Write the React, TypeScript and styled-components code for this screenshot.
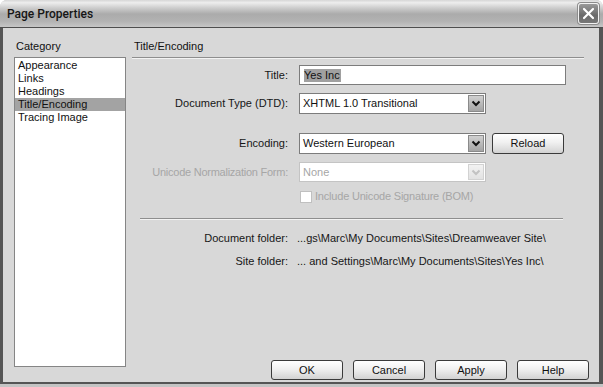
import React from "react";
import styled, { createGlobalStyle } from "styled-components";

const Global = createGlobalStyle`
  html, body { margin: 0; padding: 0; background: #ffffff; }
  body { font-family: "Liberation Sans", Arial, sans-serif; font-size: 11px; color: #111; }
`;

const Window = styled.div`
  width: 603px;
  height: 387px;
  box-sizing: border-box;
  display: flex;
  flex-direction: column;
  background: #c4c4c4;
  border-radius: 7px 7px 0 0;
  overflow: hidden;
  padding-bottom: 3px;
`;

const TitleBar = styled.div`
  height: 27px;
  flex: none;
  display: flex;
  align-items: center;
  justify-content: space-between;
  padding: 0 4px 0 7px;
  background: linear-gradient(
    to bottom,
    #d6d6d6 0%,
    #ededed 10%,
    #cfcfcf 28%,
    #ababab 52%,
    #b2b2b2 78%,
    #c6c6c6 100%
  );
  border-bottom: 1px solid #4e4e4e;
`;

const TitleText = styled.span`
  font-family: Roboto, "Liberation Sans", sans-serif;
  font-weight: 500;
  font-size: 12px;
  color: #161616;
`;

const CloseButton = styled.div`
  width: 21px;
  height: 21px;
  box-sizing: border-box;
  border: 1px solid #f2f2f2;
  border-radius: 3px;
  background: linear-gradient(to bottom, #9a9a9a, #6a6a6a 60%, #787878);
  box-shadow: 0 0 0 1px #8c8c8c;
  display: flex;
  align-items: center;
  justify-content: center;
`;

const Body = styled.div`
  flex: 1;
  display: flex;
  min-height: 0;
  background: #d8d8d8;
  border-left: 3px solid #555;
  border-right: 4px solid #555;
  border-bottom: 2px solid #555;
`;

const LeftColumn = styled.div`
  width: 112px;
  flex: none;
  display: flex;
  flex-direction: column;
  padding: 12px 0 15px 11px;
`;

const SectionLabel = styled.div`
  line-height: 13px;
  height: 13px;
  padding-left: 2px;
  margin-bottom: 4px;
`;

const ListBox = styled.div`
  flex: 1;
  background: #ffffff;
  border: 1px solid #858585;
  padding: 1px 0;
`;

const ListItem = styled.div<{ $selected?: boolean }>`
  height: 13px;
  line-height: 13px;
  padding-left: 3px;
  background: ${(p) => (p.$selected ? "#a3a3a3" : "transparent")};
`;

const RightColumn = styled.div`
  flex: 1;
  display: flex;
  flex-direction: column;
  padding: 12px 10px 2px 6px;
`;

const PanelHeader = styled.div`
  line-height: 13px;
  padding: 0 0 4px 2px;
  margin-right: 5px;
  border-bottom: 1px solid #8e8e8e;
  box-shadow: 0 1px 0 #f3f3f3;
`;

const Row = styled.div<{ $mt: number; $h?: number }>`
  display: grid;
  grid-template-columns: 156px auto;
  column-gap: 11px;
  align-items: center;
  margin-top: ${(p) => p.$mt}px;
  height: ${(p) => (p.$h ? `${p.$h}px` : "auto")};
  line-height: 13px;
`;

const Label = styled.div<{ $disabled?: boolean }>`
  text-align: right;
  white-space: nowrap;
  letter-spacing: ${(p) => (p.$disabled ? "-0.25px" : "0")};
  color: ${(p) => (p.$disabled ? "#a6a6a6" : "#161616")};
`;

const TextField = styled.div`
  width: 267px;
  height: 20px;
  box-sizing: border-box;
  background: #fff;
  border: 1px solid #7c7c7c;
  padding-left: 4px;
  display: flex;
  align-items: center;
`;

const Highlight = styled.span`
  background: #a0a0a0;
  padding: 0 1px 0 0;
  line-height: 13px;
`;

const Select = styled.div<{ $disabled?: boolean; $h: number }>`
  width: 187px;
  height: ${(p) => p.$h}px;
  box-sizing: border-box;
  background: #fff;
  border: 1px solid ${(p) => (p.$disabled ? "#c4c4c4" : "#7c7c7c")};
  display: flex;
  align-items: center;
  color: ${(p) => (p.$disabled ? "#a6a6a6" : "#111")};
`;

const SelectText = styled.span`
  flex: 1;
  padding-left: 3px;
  white-space: nowrap;
`;

const ArrowBox = styled.div<{ $disabled?: boolean }>`
  width: 16px;
  align-self: stretch;
  margin: 1px;
  box-sizing: border-box;
  border: 1px solid ${(p) => (p.$disabled ? "#d2d2d2" : "#8a8a8a")};
  background: ${(p) =>
    p.$disabled
      ? "linear-gradient(to bottom, #f2f2f2, #e2e2e2)"
      : "linear-gradient(to bottom, #d0d0d0, #a4a4a4)"};
  display: flex;
  align-items: center;
  justify-content: center;
`;

const ControlGroup = styled.div`
  display: flex;
  align-items: center;
  gap: 6px;
`;

const PushButton = styled.div<{ $h: number }>`
  width: 72px;
  height: ${(p) => p.$h}px;
  box-sizing: border-box;
  border: 1px solid #3a3a3a;
  border-radius: 3px;
  background: linear-gradient(to bottom, #ffffff 0%, #f0f0f0 45%, #d2d2d2 100%);
  display: flex;
  align-items: center;
  justify-content: center;
  color: #111;
`;

const CheckRow = styled.div`
  display: flex;
  align-items: center;
  gap: 3px;
  color: #a6a6a6;
  white-space: nowrap;
  letter-spacing: -0.2px;
`;

const CheckBox = styled.div`
  width: 12px;
  height: 12px;
  box-sizing: border-box;
  margin-left: 1px;
  background: #fff;
  border: 1px solid #c0c0c0;
`;

const Separator = styled.div`
  margin: 15px 0 0 8px;
  width: 423px;
  border-top: 1px solid #8e8e8e;
  box-shadow: 0 1px 0 #f3f3f3;
`;

const PathValue = styled.div`
  margin-left: -2px;
  white-space: nowrap;
  color: #161616;
`;

const Footer = styled.div`
  margin-top: auto;
  display: flex;
  justify-content: flex-end;
  gap: 10px;
`;

const Chevron = ({ color }: { color: string }) => (
  <svg width="10" height="7" viewBox="0 0 10 7">
    <path d="M1.5 1.5 L5 5 L8.5 1.5" fill="none" stroke={color} strokeWidth="2" />
  </svg>
);

const categories = ["Appearance", "Links", "Headings", "Title/Encoding", "Tracing Image"];

export default function App() {
  return (
    <>
      <Global />
      <Window>
        <TitleBar>
          <TitleText>Page Properties</TitleText>
          <CloseButton>
            <svg width="13" height="13" viewBox="0 0 13 13">
              <path d="M2 2 L11 11 M11 2 L2 11" stroke="#ffffff" strokeWidth="2.2" strokeLinecap="round" />
            </svg>
          </CloseButton>
        </TitleBar>
        <Body>
          <LeftColumn>
            <SectionLabel>Category</SectionLabel>
            <ListBox>
              {categories.map((c) => (
                <ListItem key={c} $selected={c === "Title/Encoding"}>
                  {c}
                </ListItem>
              ))}
            </ListBox>
          </LeftColumn>
          <RightColumn>
            <PanelHeader>Title/Encoding</PanelHeader>
            <Row $mt={7} $h={20}>
              <Label>Title:</Label>
              <TextField>
                <Highlight>Yes Inc</Highlight>
              </TextField>
            </Row>
            <Row $mt={8} $h={21}>
              <Label>Document Type (DTD):</Label>
              <Select $h={21}>
                <SelectText>XHTML 1.0 Transitional</SelectText>
                <ArrowBox>
                  <Chevron color="#111" />
                </ArrowBox>
              </Select>
            </Row>
            <Row $mt={19} $h={21}>
              <Label>Encoding:</Label>
              <ControlGroup>
                <Select $h={21}>
                  <SelectText>Western European</SelectText>
                  <ArrowBox>
                    <Chevron color="#111" />
                  </ArrowBox>
                </Select>
                <PushButton $h={21}>Reload</PushButton>
              </ControlGroup>
            </Row>
            <Row $mt={8} $h={20}>
              <Label $disabled>Unicode Normalization Form:</Label>
              <Select $disabled $h={20}>
                <SelectText>None</SelectText>
                <ArrowBox $disabled>
                  <Chevron color="#c2c2c2" />
                </ArrowBox>
              </Select>
            </Row>
            <Row $mt={8} $h={13}>
              <span />
              <CheckRow>
                <CheckBox />
                Include Unicode Signature (BOM)
              </CheckRow>
            </Row>
            <Separator />
            <Row $mt={13}>
              <Label>Document folder:</Label>
              <PathValue>...gs\Marc\My Documents\Sites\Dreamweaver Site\</PathValue>
            </Row>
            <Row $mt={10}>
              <Label>Site folder:</Label>
              <PathValue>... and Settings\Marc\My Documents\Sites\Yes Inc\</PathValue>
            </Row>
            <Footer>
              <PushButton $h={20}>OK</PushButton>
              <PushButton $h={20}>Cancel</PushButton>
              <PushButton $h={20}>Apply</PushButton>
              <PushButton $h={20}>Help</PushButton>
            </Footer>
          </RightColumn>
        </Body>
      </Window>
    </>
  );
}
